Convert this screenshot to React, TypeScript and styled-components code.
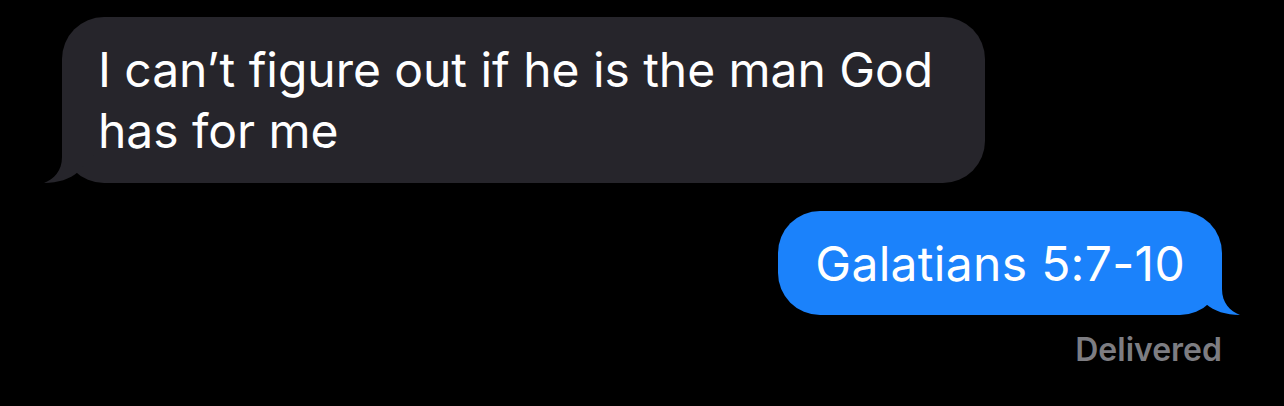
import React from "react";
import styled, { createGlobalStyle } from "styled-components";

const Global = createGlobalStyle`
  html, body { margin: 0; padding: 0; background: #000; }
  body { font-family: Inter, "Noto Sans", sans-serif; -webkit-font-smoothing: antialiased; }
`;

const Thread = styled.div`
  width: 1284px;
  height: 406px;
  box-sizing: border-box;
  padding: 17px 62px 0 62px;
  display: flex;
  flex-direction: column;
  background: #000;
  overflow: hidden;
`;

const Row = styled.div<{ $side: "left" | "right" }>`
  display: flex;
  justify-content: ${(p) => (p.$side === "left" ? "flex-start" : "flex-end")};
  margin-top: ${(p) => (p.$side === "left" ? "0" : "28px")};
`;

const Bubble = styled.div<{ $side: "left" | "right"; $width?: number }>`
  position: relative;
  box-sizing: border-box;
  width: ${(p) => (p.$width ? `${p.$width}px` : "auto")};
  padding: ${(p) => (p.$side === "left" ? "22px 36px" : "21.5px 37px 21.5px 37px")};
  border-radius: 42px;
  background: ${(p) => (p.$side === "left" ? "#26252b" : "#1b82fb")};
  color: #fff;
  font-size: 48px;
  line-height: 61px;
  letter-spacing: ${(p) => (p.$side === "left" ? "-0.05px" : "0.3px")};
`;

const Text = styled.span`
  position: relative;
  z-index: 1;
`;

const TailSvg = styled.svg<{ $side: "left" | "right" }>`
  position: absolute;
  bottom: 0;
  width: 60px;
  height: 50px;
  ${(p) => (p.$side === "left" ? "left: -18px;" : "right: -18px; transform: scaleX(-1);")}
  z-index: 0;
`;

const Tail = ({ side, color }: { side: "left" | "right"; color: string }) => (
  <TailSvg $side={side} viewBox="0 0 60 50">
    <path
      d="M18 0 L18 24 C18 38 10 46 0 50 C14 50 26 46 34 39 L50 22 L50 0 Z"
      fill={color}
    />
  </TailSvg>
);

const Status = styled.div`
  align-self: flex-end;
  margin-top: 17px;
  font-size: 32px;
  line-height: 36px;
  font-weight: 600;
  color: #7d7d82;
`;

export default function App() {
  return (
    <>
      <Global />
      <Thread>
        <Row $side="left">
          <Bubble $side="left" $width={923}>
            <Tail side="left" color="#26252b" />
            <Text>I can’t figure out if he is the man God has for me</Text>
          </Bubble>
        </Row>
        <Row $side="right">
          <Bubble $side="right">
            <Tail side="right" color="#1b82fb" />
            <Text>Galatians 5:7-10</Text>
          </Bubble>
        </Row>
        <Status>Delivered</Status>
      </Thread>
    </>
  );
}
